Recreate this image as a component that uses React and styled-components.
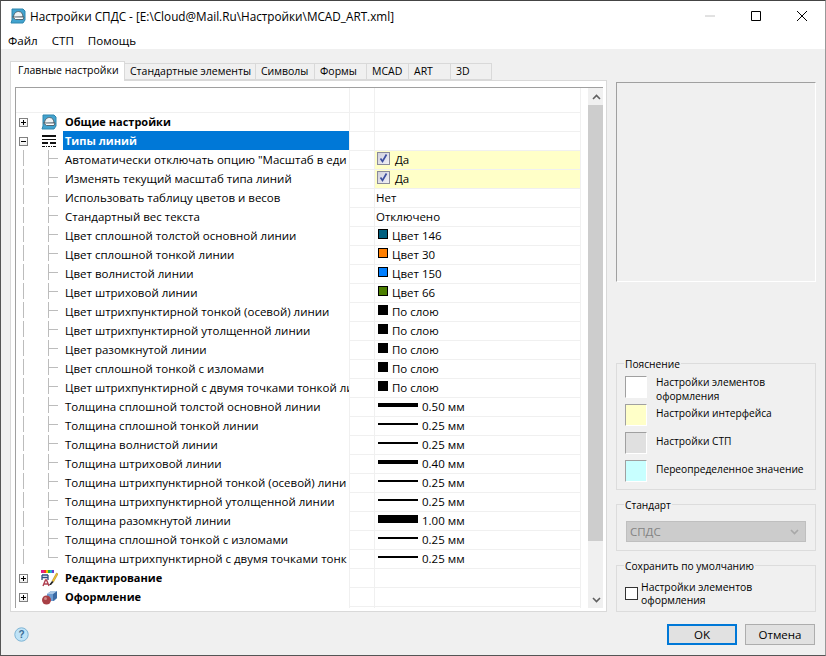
import React from 'react';
import styled, { createGlobalStyle } from 'styled-components';

const GlobalStyle = createGlobalStyle`
  html, body { margin: 0; padding: 0; background: #f0f0f0; }
  body { font-family: "Open Sans", "Noto Sans", sans-serif; font-size: 11.5px; color: #000; }
`;

const Window = styled.div`
  width: 826px;
  height: 656px;
  box-sizing: border-box;
  border: 1px solid #555;
  border-top-color: #444;
  border-right-color: #999;
  display: flex;
  flex-direction: column;
  background: #f0f0f0;
  overflow: hidden;
`;

const TitleBar = styled.div`
  height: 29px;
  flex: none;
  background: #fff;
  display: flex;
  align-items: center;
  padding-left: 9px;
`;

const TitleText = styled.div`
  margin-left: 4px;
  padding-top: 1px;
  font-size: 11.75px;
  flex: 1;
  white-space: nowrap;
`;

const WinButton = styled.div`
  width: 46px;
  height: 29px;
  display: flex;
  align-items: center;
  justify-content: center;
`;

const MenuBar = styled.div`
  height: 19px;
  flex: none;
  background: #fff;
  display: flex;
  gap: 14px;
  padding-left: 7px;
  font-size: 11.6px;
  line-height: 22px;
`;

const Content = styled.div`
  flex: 1;
  display: flex;
  padding: 12px 9px 0 9px;
  gap: 9px;
  min-height: 0;
`;

const LeftPane = styled.div`
  width: 597px;
  flex: none;
  display: flex;
  flex-direction: column;
`;

const TabRow = styled.div`
  height: 19px;
  display: flex;
  align-items: flex-end;
  flex: none;
  position: relative;
  z-index: 1;
`;

const Tab = styled.div`
  box-sizing: border-box;
  height: ${p => (p.$active ? '20px' : '17px')};
  width: ${p => p.$w}px;
  margin-bottom: ${p => (p.$active ? '-1px' : '0')};
  background: ${p => (p.$active ? '#fff' : '#f0f0f0')};
  border: 1px solid #d9d9d9;
  border-left: ${p => (p.$active ? '1px solid #d9d9d9' : 'none')};
  border-bottom: ${p => (p.$active ? 'none' : '1px solid #d9d9d9')};
  font-size: 10.5px;
  line-height: ${p => (p.$active ? '17px' : '15px')};
  padding-left: ${p => (p.$active ? '7px' : '5px')};
  white-space: nowrap;
`;

const TabPanel = styled.div`
  box-sizing: border-box;
  height: 532px;
  background: #fff;
  border: 1px solid #d9d9d9;
  padding: 6px 3px 4px 4px;
`;

const TreeBox = styled.div`
  height: 100%;
  border-top: 1px solid #a0a0a0;
  border-left: 1px solid #a0a0a0;
  display: flex;
  overflow: hidden;
`;

const Tree = styled.div`
  width: 565px;
  flex: none;
  overflow: hidden;
`;

const HeaderRow = styled.div`
  height: 24px;
  display: grid;
  grid-template-columns: 333px 25px 1fr;
  border-bottom: 1px solid #f0f0f0;
  border-right: 1px solid #f0f0f0;
  & > div + div { border-left: 1px solid #f0f0f0; }
`;

const Row = styled.div`
  box-sizing: border-box;
  height: 19px;
  display: grid;
  grid-template-columns: 47px 286px 25px 1fr;
`;

const Gutter = styled.div`
  position: relative;
  display: flex;
  align-items: center;
`;

const Expander = styled.div`
  box-sizing: border-box;
  width: 9px;
  height: 9px;
  margin-left: 3px;
  border: 1px solid #808080;
  background: linear-gradient(#fff, #f0f0f0);
  position: relative;
  flex: none;
  visibility: ${p => (p.$hidden ? 'hidden' : 'visible')};
  &::before {
    content: '';
    position: absolute;
    left: 1px;
    right: 1px;
    top: 3px;
    height: 1px;
    background: #000;
  }
  &::after {
    content: '';
    display: ${p => (p.$open ? 'none' : 'block')};
    position: absolute;
    top: 1px;
    bottom: 1px;
    left: 3px;
    width: 1px;
    background: #000;
  }
`;

const IconSlot = styled.div`
  margin-left: 13px;
  width: 17px;
  height: 17px;
  flex: none;
`;

const TreeLines = styled.div`
  &::before {
    content: '';
    position: absolute;
    left: 7px;
    top: -1px;
    height: ${p => (p.$last ? '15px' : '16px')};
    width: 1px;
    background: #bcbcbc;
  }
  &::after {
    content: '';
    position: absolute;
    left: 32px;
    top: -1px;
    width: 9px;
    height: ${p => (p.$last ? '9px' : '16px')};
    border-left: 1px solid #bcbcbc;
    background: linear-gradient(#bcbcbc, #bcbcbc) no-repeat 0 8px / 100% 1px;
  }
`;

const Name = styled.div`
  box-sizing: border-box;
  font-size: ${p => (p.$bold ? '11px' : '11.5px')};
  line-height: 18px;
  font-weight: ${p => (p.$bold ? 700 : 400)};
  padding-left: 2px;
  white-space: nowrap;
  overflow: hidden;
  background: ${p => (p.$selected ? '#0078d7' : 'transparent')};
  color: ${p => (p.$selected ? '#fff' : '#000')};
  margin-top: ${p => (p.$selected ? '-1px' : '0')};
  padding-top: ${p => (p.$selected ? '1px' : '0')};
  height: 19px;
`;

const EmptyCell = styled.div`
  border-bottom: 1px solid #f0f0f0;
  border-left: 1px solid #f0f0f0;
`;

const ValueCell = styled.div`
  box-sizing: border-box;
  border-bottom: 1px solid #f0f0f0;
  border-left: 1px solid #f0f0f0;
  border-right: 1px solid #f0f0f0;
  background: ${p => (p.$yellow ? '#ffffc8' : '#fff')};
  display: flex;
  align-items: center;
  padding-left: 1px;
  font-size: 11.5px;
  line-height: 18px;
  white-space: nowrap;
`;

const CheckBox = styled.div`
  box-sizing: border-box;
  width: 13px;
  height: 13px;
  margin: -4px 5px 0 1px;
  border: 1px solid #8a8a9a;
  background: linear-gradient(135deg, #d0d0dc, #f0f0f6);
  display: flex;
  align-items: center;
  justify-content: center;
`;

const Swatch = styled.div`
  box-sizing: border-box;
  width: 10px;
  height: 10px;
  margin: -4px 4px 0 2px;
  border: 1px solid #000;
  background: ${p => p.$color};
  flex: none;
`;

const LineSample = styled.div`
  width: 40px;
  height: ${p => p.$h}px;
  background: #000;
  margin: -4px 4px 0 2px;
  flex: none;
`;

const ScrollBar = styled.div`
  width: 16px;
  margin-left: 7px;
  flex: none;
  background: #f0f0f0;
  display: flex;
  flex-direction: column;
  align-items: stretch;
`;

const ScrollArrow = styled.div`
  height: 17px;
  flex: none;
  display: flex;
  align-items: center;
  justify-content: center;
`;

const Thumb = styled.div`
  height: 436px;
  background: #cdcdcd;
  flex: none;
`;

const ScrollSpace = styled.div`
  flex: 1;
`;

const RightPane = styled.div`
  width: 200px;
  flex: none;
  padding-top: 21px;
  display: flex;
  flex-direction: column;
`;

const Preview = styled.div`
  box-sizing: border-box;
  height: 200px;
  border: 1px solid;
  border-color: #a0a0a0 #fff #fff #a0a0a0;
  background: #f0f0f0;
  margin-bottom: 81px;
`;

const Group = styled.div`
  box-sizing: border-box;
  height: ${p => p.$h}px;
  margin-top: ${p => p.$mt || 0}px;
  border: 1px solid #dcdcdc;
  position: relative;
  padding: ${p => p.$pad || '0 8px'};
`;

const GroupLabel = styled.div`
  position: absolute;
  left: 7px;
  top: -7px;
  background: #f0f0f0;
  padding: 0 1px;
  font-size: 10.2px;
  line-height: 14px;
`;

const LegendList = styled.div`
  padding-top: 9px;
`;

const LegendRow = styled.div`
  display: flex;
  height: 28px;
  gap: 9px;
  font-size: 10.2px;
  line-height: 14px;
`;

const LegendText = styled.span`
  margin-top: ${p => (p.$single ? '2px' : '-1px')};
  white-space: ${p => (p.$single ? 'nowrap' : 'normal')};
`;

const LegendSwatch = styled.div`
  box-sizing: border-box;
  width: 22px;
  height: 22px;
  flex: none;
  background: ${p => p.$color};
  border-top: 1px solid #a0a0a0;
  border-left: 1px solid #a0a0a0;
  border-right: 1px solid #fff;
  border-bottom: 1px solid #fff;
`;

const Combo = styled.div`
  box-sizing: border-box;
  height: 21px;
  background: #cccccc;
  border: 1px solid #bfbfbf;
  color: #838383;
  display: flex;
  align-items: center;
  justify-content: space-between;
  padding: 0 6px 0 3px;
  font-size: 11.5px;
`;

const SaveRow = styled.div`
  display: flex;
  align-items: center;
  gap: 3px;
  font-size: 10.4px;
  line-height: 13px;
`;

const SaveBox = styled.div`
  box-sizing: border-box;
  width: 13px;
  height: 13px;
  margin-top: -2px;
  flex: none;
  border: 1px solid #333;
  background: #fff;
`;

const Footer = styled.div`
  box-sizing: border-box;
  height: 43px;
  flex: none;
  display: flex;
  align-items: center;
  padding: 2px 10px 0 13px;
  gap: 8px;
`;

const Spacer = styled.div`
  flex: 1;
`;

const Button = styled.div`
  box-sizing: border-box;
  width: 70px;
  height: 21px;
  background: #e1e1e1;
  border: ${p => (p.$primary ? '2px solid #0078d7' : '1px solid #adadad')};
  display: flex;
  align-items: center;
  justify-content: center;
  font-size: 11.5px;
`;

const AppIcon = () => (
  <svg width="16" height="16" viewBox="0 0 16 16">
    <path d="M2 1h11l2 2v9l-2 3H1l1-3z" fill="#42a3cf" stroke="#2f86ad" />
    <path d="M3.5 9.5C3.5 6 5.5 3.5 8.5 3.5s4.500 2.500 4.500 5.500z" fill="#eef3f5" stroke="#4a5a64" strokeWidth="0.9" />
    <path d="M2.500 9h11.500l-1 2.500H5.500z" fill="#fff" stroke="#4a5a64" strokeWidth="0.9" />
  </svg>
);

const LinesIcon = () => (
  <svg width="17" height="17" viewBox="0 0 17 17">
    <path d="M1 2h14v2H1z" fill="#111" />
    <path d="M1 6h14v1H1z" fill="#111" />
    <path d="M1 9h6v2H1zM9 9h6v2H9z" fill="#111" />
    <path d="M1 13h3v1H1zM5 13h1v1H5zM7 13h2v1H7zM10 13h1v1h-1zM12 13h3v1h-3z" fill="#111" />
  </svg>
);

const EditIcon = () => (
  <svg width="17" height="17" viewBox="0 0 17 17">
    <path d="M0 0h3v3H0z" fill="#e0218a" />
    <path d="M3 0h2v3H3z" fill="#f03030" />
    <path d="M5 0h2v3H5z" fill="#f4c400" />
    <path d="M7 0h2v3H7z" fill="#22b14c" />
    <path d="M9 0h2v3H9z" fill="#22b0d0" />
    <path d="M11 0h2v3h-2z" fill="#6a3fd0" />
    <path d="M1 5v5M7 5v5M1 5h6M1 7.500h6" fill="none" stroke="#2f4f80" strokeWidth="1.3" />
    <path d="M2 16l2.500-6h1L8 16M3 14h4" fill="none" stroke="#b04050" strokeWidth="1.4" />
    <path d="M11 11l4.500-8 1.500 1-4.500 8z" fill="#f2c230" stroke="#a07a10" strokeWidth="0.5" />
    <path d="M11 11l1.500 1-2.500 3H8z" fill="#222" />
  </svg>
);

const DesignIcon = () => (
  <svg width="17" height="17" viewBox="0 0 17 17">
    <path d="M6 5l4-3h6v7l-3 3H6z" fill="#6c9bd0" />
    <path d="M12 5v7l4-3V2z" fill="#3a6aa5" />
    <path d="M6 5l4-3h6l-4 3z" fill="#a9c7e6" />
    <circle cx="5.500" cy="11" r="4.500" fill="#a83f45" />
    <circle cx="4.500" cy="9.500" r="1.500" fill="#d28a8a" />
  </svg>
);

const CutIcon = () => (
  <svg width="17" height="17" viewBox="0 0 17 17">
    <path d="M3 1h9v1H3z" fill="#111" />
  </svg>
);

const Check = () => (
  <svg width="11" height="11" viewBox="0 0 11 11">
    <path d="M2.500 5.500l2 3 4-7" fill="none" stroke="#3d4f9f" strokeWidth="1.7" />
  </svg>
);

const Chevron = ({ up, color = '#606060' }) => (
  <svg width="9" height="6" viewBox="0 0 9 6">
    <path d={up ? 'M1 5l3.500-3.500L8 5' : 'M1 1l3.500 3.500L8 1'} fill="none" stroke={color} strokeWidth="1.6" />
  </svg>
);

const HelpIcon = () => (
  <svg width="15" height="15" viewBox="0 0 15 15">
    <circle cx="7.500" cy="7.500" r="6.700" fill="#bfe3f7" stroke="#7fb4d4" />
    <text x="7.500" y="11" textAnchor="middle" fontSize="10" fontWeight="700" fontFamily="Liberation Sans, sans-serif" fill="#3a6d96">?</text>
  </svg>
);

const tabs = [
  ['Главные настройки', 115],
  ['Стандартные элементы', 131],
  ['Символы', 59],
  ['Формы', 52],
  ['MCAD', 42],
  ['ART', 42],
  ['3D', 41],
];

const rows = [
  ['Автоматически отключать опцию "Масштаб в еди', { check: true }],
  ['Изменять текущий масштаб типа линий', { check: true }],
  ['Использовать таблицу цветов и весов', { text: 'Нет' }],
  ['Стандартный вес текста', { text: 'Отключено' }],
  ['Цвет сплошной толстой основной линии', { color: '#005f7f', text: 'Цвет 146' }],
  ['Цвет сплошной тонкой линии', { color: '#ff7f00', text: 'Цвет 30' }],
  ['Цвет волнистой линии', { color: '#007fff', text: 'Цвет 150' }],
  ['Цвет штриховой линии', { color: '#4c7f00', text: 'Цвет 66' }],
  ['Цвет штрихпунктирной тонкой (осевой) линии', { color: '#000', text: 'По слою' }],
  ['Цвет штрихпунктирной утолщенной линии', { color: '#000', text: 'По слою' }],
  ['Цвет разомкнутой линии', { color: '#000', text: 'По слою' }],
  ['Цвет сплошной тонкой с изломами', { color: '#000', text: 'По слою' }],
  ['Цвет штрихпунктирной с двумя точками тонкой ли', { color: '#000', text: 'По слою' }],
  ['Толщина сплошной толстой основной линии', { line: 4, text: '0.50 мм' }],
  ['Толщина сплошной тонкой линии', { line: 2, text: '0.25 мм' }],
  ['Толщина волнистой линии', { line: 2, text: '0.25 мм' }],
  ['Толщина штриховой линии', { line: 4, text: '0.40 мм' }],
  ['Толщина штрихпунктирной тонкой (осевой) лини', { line: 2, text: '0.25 мм' }],
  ['Толщина штрихпунктирной утолщенной линии', { line: 2, text: '0.25 мм' }],
  ['Толщина разомкнутой линии', { line: 8, text: '1.00 мм' }],
  ['Толщина сплошной тонкой с изломами', { line: 2, text: '0.25 мм' }],
  ['Толщина штрихпунктирной с двумя точками тонк', { line: 2, text: '0.25 мм' }],
];

const legend = [
  ['#ffffff', 'Настройки элементов оформления'],
  ['#ffffc8', 'Настройки интерфейса', true],
  ['#e0e0e0', 'Настройки СТП', true],
  ['#c8ffff', 'Переопределенное значение', true],
];

const Section = ({ icon, name, open, selected, noToggle }) => (
  <Row>
    <Gutter>
      <Expander $open={open} $hidden={noToggle} />
      <IconSlot>{icon}</IconSlot>
    </Gutter>
    <Name $bold $selected={selected}>{name}</Name>
    <EmptyCell />
    <ValueCell />
  </Row>
);

const Value = ({ v }) => (
  <ValueCell $yellow={v.check}>
    {v.check && <CheckBox><Check /></CheckBox>}
    {v.check && 'Да'}
    {v.color && <Swatch $color={v.color} />}
    {v.line && <LineSample $h={v.line} />}
    {v.text}
  </ValueCell>
);

export default function App() {
  return (
    <>
      <GlobalStyle />
      <Window>
        <TitleBar>
          <AppIcon />
          <TitleText>Настройки СПДС - [E:\Cloud@Mail.Ru\Настройки\MCAD_ART.xml]</TitleText>
          <WinButton>
            <svg width="10" height="10" viewBox="0 0 10 10"><path d="M0 5h10" stroke="#c4c4c4" /></svg>
          </WinButton>
          <WinButton>
            <svg width="10" height="10" viewBox="0 0 10 10"><path d="M.5.5h9v9h-9z" fill="none" stroke="#000" /></svg>
          </WinButton>
          <WinButton>
            <svg width="10" height="10" viewBox="0 0 10 10"><path d="M0 0l10 10M10 0L0 10" stroke="#000" /></svg>
          </WinButton>
        </TitleBar>
        <MenuBar>
          <span>Файл</span>
          <span>СТП</span>
          <span>Помощь</span>
        </MenuBar>
        <Content>
          <LeftPane>
            <TabRow>
              {tabs.map(([t, w], i) => <Tab key={t} $w={w} $active={i === 0}>{t}</Tab>)}
            </TabRow>
            <TabPanel>
              <TreeBox>
                <Tree>
                  <HeaderRow><div /><div /><div /></HeaderRow>
                  <Section icon={<AppIcon />} name="Общие настройки" />
                  <Section icon={<LinesIcon />} name="Типы линий" open selected />
                  {rows.map(([name, v], i) => (
                    <Row key={name}>
                      <Gutter><TreeLines $last={i === rows.length - 1} /></Gutter>
                      <Name>{name}</Name>
                      <EmptyCell />
                      <Value v={v} />
                    </Row>
                  ))}
                  <Section icon={<EditIcon />} name="Редактирование" />
                  <Section icon={<DesignIcon />} name="Оформление" />
                  <Section icon={<CutIcon />} name="" noToggle />
                </Tree>
                <ScrollBar>
                  <ScrollArrow><Chevron up /></ScrollArrow>
                  <Thumb />
                  <ScrollSpace />
                  <ScrollArrow><Chevron /></ScrollArrow>
                </ScrollBar>
              </TreeBox>
            </TabPanel>
          </LeftPane>
          <RightPane>
            <Preview />
            <Group $h={127} $pad="3px 8px 0">
              <GroupLabel>Пояснение</GroupLabel>
              <LegendList>
                {legend.map(([c, t, single]) => (
                  <LegendRow key={c}>
                    <LegendSwatch $color={c} />
                    <LegendText $single={single}>{t}</LegendText>
                  </LegendRow>
                ))}
              </LegendList>
            </Group>
            <Group $h={47} $mt={14} $pad="16px 9px 0">
              <GroupLabel>Стандарт</GroupLabel>
              <Combo>СПДС<Chevron color="#a8a8a8" /></Combo>
            </Group>
            <Group $h={47} $mt={14} $pad="15px 8px 0">
              <GroupLabel>Сохранить по умолчанию</GroupLabel>
              <SaveRow><SaveBox /><span>Настройки элементов оформления</span></SaveRow>
            </Group>
          </RightPane>
        </Content>
        <Footer>
          <HelpIcon />
          <Spacer />
          <Button $primary>OK</Button>
          <Button>Отмена</Button>
        </Footer>
      </Window>
    </>
  );
}
